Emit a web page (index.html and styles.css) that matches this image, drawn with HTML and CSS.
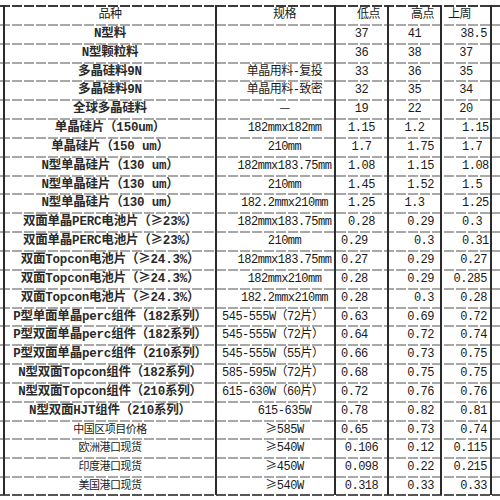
FILE: index.html
```html
<!DOCTYPE html>
<html lang="zh-CN">
<head>
<meta charset="utf-8">
<title>价格表</title>
<link rel="stylesheet" href="styles.css">
</head>
<body>
<div class="sheet">
  <div class="row head">
    <div class="cell c">品种</div><div class="cell c2">规格</div><div class="cell r">低点</div><div class="cell r4">高点</div><div class="cell l5">上周</div>
  </div>
  <div class="row"><div class="cell c name">N型料</div><div class="cell c2"></div><div class="cell c">37</div><div class="cell c">41</div><div class="cell r5">38.5</div></div>
  <div class="row"><div class="cell c name">N型颗粒料</div><div class="cell c2"></div><div class="cell c">36</div><div class="cell c">38</div><div class="cell c">37</div></div>
  <div class="row"><div class="cell c name">多晶硅料9N</div><div class="cell c2">单晶用料-复投</div><div class="cell c">33</div><div class="cell c">36</div><div class="cell c">35</div></div>
  <div class="row"><div class="cell c name">多晶硅料9N</div><div class="cell c2">单晶用料-致密</div><div class="cell c">32</div><div class="cell c">35</div><div class="cell c">34</div></div>
  <div class="row"><div class="cell c name">全球多晶硅料</div><div class="cell c2"><span class="sym">—</span></div><div class="cell c">19</div><div class="cell c">22</div><div class="cell c">20</div></div>
  <div class="row"><div class="cell c name">单晶硅片（150um）</div><div class="cell c2">182mmx182mm</div><div class="cell c">1.15</div><div class="cell c">1.2</div><div class="cell l20">1.15</div></div>
  <div class="row"><div class="cell c name">单晶硅片（150 um）</div><div class="cell c2">210mm</div><div class="cell c">1.7</div><div class="cell r4">1.75</div><div class="cell l20">1.7</div></div>
  <div class="row"><div class="cell c name">N型单晶硅片（130 um）</div><div class="cell c2">182mmx183.75mm</div><div class="cell c">1.08</div><div class="cell r4">1.15</div><div class="cell l20">1.08</div></div>
  <div class="row"><div class="cell c name">N型单晶硅片（130 um）</div><div class="cell c2">210mm</div><div class="cell c">1.45</div><div class="cell r4">1.52</div><div class="cell l20">1.5</div></div>
  <div class="row"><div class="cell c name">N型单晶硅片（130 um）</div><div class="cell c2">182.2mmx210mm</div><div class="cell c">1.25</div><div class="cell c">1.3</div><div class="cell l20">1.25</div></div>
  <div class="row"><div class="cell c name">双面单晶PERC电池片（<span class="sym">≥</span>23%）</div><div class="cell c2">182mmx183.75mm</div><div class="cell c">0.28</div><div class="cell r4">0.29</div><div class="cell l20">0.3</div></div>
  <div class="row"><div class="cell c name">双面单晶PERC电池片（<span class="sym">≥</span>23%）</div><div class="cell c2">210mm</div><div class="cell l">0.29</div><div class="cell r4">0.3</div><div class="cell l20">0.31</div></div>
  <div class="row"><div class="cell c name">双面Topcon电池片（<span class="sym">≥</span>24.3%）</div><div class="cell c2">182mmx183.75mm</div><div class="cell l">0.27</div><div class="cell r4">0.29</div><div class="cell r5">0.27</div></div>
  <div class="row"><div class="cell c name">双面Topcon电池片（<span class="sym">≥</span>24.3%）</div><div class="cell c2">182mmx210mm</div><div class="cell l">0.28</div><div class="cell r4">0.29</div><div class="cell r5">0.285</div></div>
  <div class="row"><div class="cell c name">双面Topcon电池片（<span class="sym">≥</span>24.3%）</div><div class="cell c2">182.2mmx210mm</div><div class="cell l">0.28</div><div class="cell r4">0.3</div><div class="cell r5">0.28</div></div>
  <div class="row"><div class="cell c name">P型单面单晶perc组件（182系列）</div><div class="cell l">545-555W（72片）</div><div class="cell l">0.63</div><div class="cell r4">0.69</div><div class="cell r5">0.72</div></div>
  <div class="row"><div class="cell c name">P型双面单晶perc组件（182系列）</div><div class="cell l">545-555W（72片）</div><div class="cell l">0.64</div><div class="cell r4">0.72</div><div class="cell r5">0.74</div></div>
  <div class="row"><div class="cell c name">P型双面单晶perc组件（210系列）</div><div class="cell l">545-555W（55片）</div><div class="cell l">0.66</div><div class="cell r4">0.73</div><div class="cell r5">0.75</div></div>
  <div class="row"><div class="cell c name">N型双面Topcon组件（182系列）</div><div class="cell l">585-595W（72片）</div><div class="cell l">0.68</div><div class="cell r4">0.75</div><div class="cell r5">0.75</div></div>
  <div class="row"><div class="cell c name">N型双面Topcon组件（210系列）</div><div class="cell l">615-630W（60片）</div><div class="cell l">0.72</div><div class="cell r4">0.76</div><div class="cell r5">0.76</div></div>
  <div class="row"><div class="cell c name">N型双面HJT组件（210系列）</div><div class="cell c2">615-635W</div><div class="cell l">0.78</div><div class="cell r4">0.82</div><div class="cell r5">0.81</div></div>
  <div class="row"><div class="cell c sm">中国区项目价格</div><div class="cell c2"><span class="sym">≥</span>585W</div><div class="cell l">0.65</div><div class="cell r4">0.73</div><div class="cell r5">0.74</div></div>
  <div class="row"><div class="cell c sm">欧洲港口现货</div><div class="cell c2"><span class="sym">≥</span>540W</div><div class="cell c">0.106</div><div class="cell r4">0.12</div><div class="cell r5">0.115</div></div>
  <div class="row"><div class="cell c sm">印度港口现货</div><div class="cell c2"><span class="sym">≥</span>450W</div><div class="cell c">0.098</div><div class="cell r4">0.22</div><div class="cell r5">0.215</div></div>
  <div class="row"><div class="cell c sm">美国港口现货</div><div class="cell c2"><span class="sym">≥</span>540W</div><div class="cell c">0.318</div><div class="cell r4">0.33</div><div class="cell r5">0.33</div></div>
</div>
</body>
</html>
```
FILE: styles.css
```css
html, body {
  margin: 0;
  padding: 0;
  background: #ffffff;
}

body {
  width: 500px;
  height: 500px;
  overflow: hidden;
  font-family: "Liberation Mono", "Noto Sans CJK SC", monospace;
  font-size: 12px;
  letter-spacing: -0.5px;
  color: #1a1a1a;
}

.sheet {
  padding-top: 5px;
}

.row {
  display: grid;
  grid-template-columns: 212px 119px 53px 53px 52px;
  height: 18.85px;
  padding-left: 3px;
  background-image: repeating-linear-gradient(90deg, #a8a8a8 0 10px, transparent 10px 12px);
  background-size: 100% 2px;
  background-repeat: no-repeat;
  background-position: 0 0;
}

.row.head {
  background-image: repeating-linear-gradient(90deg, #3a3a3a 0 10px, transparent 10px 12px);
}

.sheet::after {
  content: "";
  display: block;
  height: 2px;
  margin-top: -1px;
  background-image: repeating-linear-gradient(90deg, #555 0 10px, transparent 10px 12px);
}

.cell {
  border-left: 2px solid #2b2b2b;
  padding-top: 2px;
  line-height: 16px;
  white-space: nowrap;
}

.cell:last-child {
  border-right: 2px solid #2b2b2b;
}

.c { text-align: center; }
.c2 { text-align: center; padding-left: 18px; }
.l { text-align: left; padding-left: 5px; }
.r { text-align: right; padding-right: 7px; }
.r4 { text-align: right; padding-right: 6px; }
.r5 { text-align: right; padding-right: 3px; }
.l5 { text-align: left; padding-left: 6px; }
.l20 { text-align: left; padding-left: 20px; }

.name {
  font-size: 12.5px;
  letter-spacing: -0.2px;
  font-weight: bold;
  color: #2a2a2a;
}

.sm { font-size: 11px; }

.sym {
  font-family: "Noto Sans CJK SC", sans-serif;
  line-height: 1;
}
```
